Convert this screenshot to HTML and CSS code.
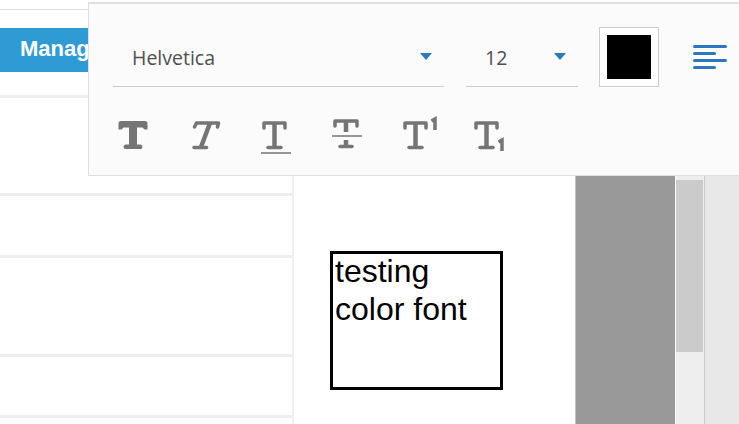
FILE: index.html
```html
<!DOCTYPE html>
<html lang="en">
<head>
<meta charset="utf-8">
<title>Editor</title>
<link rel="stylesheet" href="styles.css">
</head>
<body>
<div class="app">
  <aside class="side">
    <div class="head">
      <div class="topline"></div>
      <button class="manage">Manage</button>
    </div>
    <div class="row r1"></div>
    <div class="row r2"></div>
    <div class="row r3"></div>
    <div class="row r4"></div>
    <div class="row r5"></div>
  </aside>
  <main class="canvas">
    <div class="textbox"><div class="boxtext">testing<br>color font</div></div>
  </main>
  <div class="gutter"></div>
  <div class="scroll"><div class="thumb"></div></div>
  <div class="rail"></div>
</div>

<section class="toolbar">
  <div class="line1">
    <div class="select font"><span>Helvetica</span><i class="caret"></i></div>
    <div class="select size"><span>12</span><i class="caret"></i></div>
    <div class="swatch"><div class="chip"></div></div>
    <svg class="align" width="34" height="26" viewBox="0 0 34 26">
      <path d="M1.500 2.500H32.500M1.500 9.500H21.500M1.500 16.500H32.500M1.500 23.500H21.500"/>
    </svg>
  </div>
  <div class="line2">
    <svg class="ico" width="44" height="44" viewBox="0 0 44 44"><path class="solid" d="M10 9H34Q36.500 9 36.500 11.500V17.500H33.500L31.500 15.500H26V32.500H29.500Q31.500 33 31.500 35Q31.500 37 29.500 37H14.500Q12.500 37 12.500 35Q12.500 33 14.500 32.500H18V15.500H12.500L10.500 17.500H7.500V11.500Q7.500 9 10 9Z"/></svg>
    <svg class="ico" width="44" height="44" viewBox="0 0 44 44"><path class="thin" d="M12.500 15L14.500 11H36.500L35.500 15"/><path class="med" d="M28 11L19 35"/><path class="thin" d="M12 35.500H24.500"/></svg>
    <svg class="ico" width="44" height="44" viewBox="0 0 44 44"><path class="thin" d="M11 16V11H32V16"/><path class="med" d="M21.500 11V35"/><path class="thin" d="M15 35.500H28"/><path class="rule" d="M8 41H38"/></svg>
    <svg class="ico" width="44" height="44" viewBox="0 0 44 44"><path class="thin" d="M11 14V9H33V14"/><path class="med" d="M22 9V20M22 28V34"/><path class="thin" d="M16 34.500H28"/><path class="rule" d="M8 24H38"/></svg>
    <svg class="ico" width="44" height="44" viewBox="0 0 44 44"><path class="thin" d="M10 16V11H31V16"/><path class="med" d="M20.500 11V35"/><path class="thin" d="M14 35.500H27"/><path class="one" d="M36.500 9L40 7V18"/></svg>
    <svg class="ico" width="44" height="44" viewBox="0 0 44 44"><path class="thin" d="M10 16V11H31V16"/><path class="med" d="M20.500 11V35"/><path class="thin" d="M14 35.500H27"/><path class="one" d="M32.500 30L36 28V39"/></svg>
  </div>
</section>
</body>
</html>
```

FILE: styles.css
```css
* { box-sizing: border-box; }
html, body { margin: 0; height: 100%; overflow: hidden; background: #fff; }
body { padding-top: 2px; font-family: "Open Sans", "Liberation Sans", sans-serif; }

.app {
  display: grid;
  grid-template-columns: 294px 281px 101px 29px 34px;
  height: 422px;
}

.side { border-right: 2px solid #f0f0f0; overflow: hidden; }
.head {
  height: 96px;
  padding-top: 7px;
  border-bottom: 3px solid #eeeeee;
}
.topline { height: 1px; margin-bottom: 18px; background: #dcdcdc; }
.manage {
  display: block;
  width: 100%;
  height: 44px;
  margin: 0;
  padding: 0 0 2px 20px;
  border: 0;
  background: #2e9bd5;
  color: #fff;
  text-align: left;
  font: bold 22px "Liberation Sans", sans-serif;
}
.row { border-bottom: 3px solid #eeeeee; }
.r1 { height: 98px; }
.r2 { height: 62px; }
.r3 { height: 99px; }
.r4 { height: 61px; }
.r5 { height: 20px; }

.canvas { padding: 249px 0 0 36px; }
.textbox {
  width: 173px;
  height: 139px;
  border: 3px solid #000;
  padding: 0 0 0 2px;
  color: #000;
  font: 32px/38px "Liberation Sans", sans-serif;
}
.boxtext { margin-top: -2px; }

.gutter { background: #999; border-left: 1px solid #c4c4c4; border-right: 1px solid #fff; }
.scroll { background: #eeeeee; padding-top: 178px; border-right: 1px solid #c8c8c8; }
.thumb { width: 27px; height: 172px; background: #cbcbcb; }
.rail { background: #e8e8e8; }

.toolbar {
  position: absolute;
  left: 88px;
  top: 2px;
  width: 651px;
  height: 174px;
  padding: 0 0 0 24px;
  background: #fbfbfb;
  border: 1px solid #dedede;
  border-top-width: 2px;
  border-right: 0;
}
.line1 { display: flex; align-items: flex-start; padding-top: 23px; height: 108px; }
.select {
  display: flex;
  align-items: center;
  justify-content: space-between;
  height: 60px;
  border-bottom: 1px solid #cccccc;
  color: #4f4f4f;
}
.select span { padding-top: 2px; }
.font { width: 331px; padding: 0 12px 0 19px; margin-right: 22px; font-size: 19.500px; }
.size { width: 112px; padding: 0 12px 0 19px; margin-right: 21px; font-size: 19.500px; }
.caret {
  width: 0;
  height: 0;
  border-left: 6.500px solid transparent;
  border-right: 6.500px solid transparent;
  border-top: 7px solid #2a78c2;
}
.swatch { width: 60px; height: 60px; border: 1px solid #cccccc; padding: 7px; background: #fff; }
.chip { width: 44px; height: 44px; background: #000; }
.align { margin: 17px 0 0 34px; }
.align path { fill: none; stroke: #2a78c2; stroke-width: 3px; stroke-linecap: round; }

.line2 { display: flex; gap: 27px; margin-left: -2px; }
.ico path { fill: none; stroke: #757575; stroke-linecap: round; stroke-linejoin: round; }
.ico .solid { fill: #757575; stroke: none; }
.ico .med { stroke-width: 4.500px; stroke-linecap: butt; }
.ico .thin { stroke-width: 3.500px; }
.ico .rule { stroke-width: 1.500px; stroke-linecap: butt; }
.ico .one { stroke-width: 3.500px; stroke-linecap: butt; stroke-linejoin: miter; }
```
